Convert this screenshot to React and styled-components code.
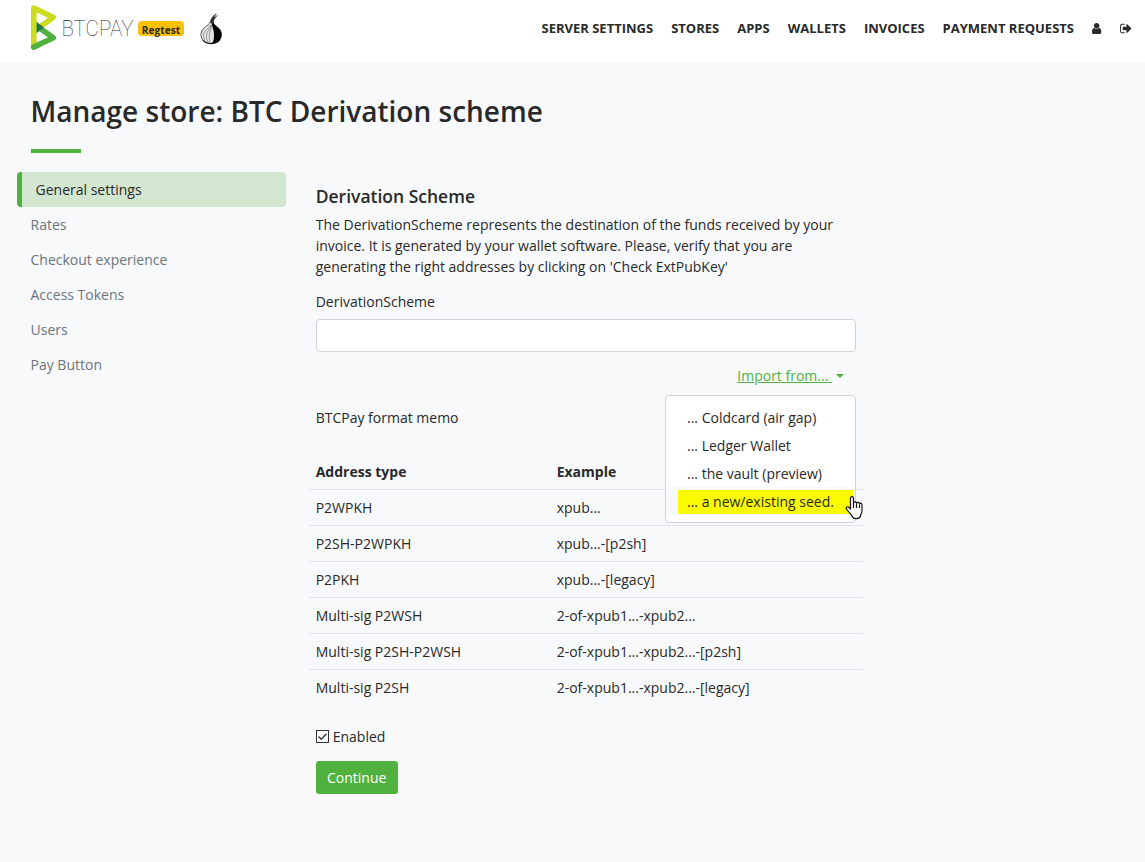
import React from 'react';
import styled, { createGlobalStyle } from 'styled-components';

const GlobalStyle = createGlobalStyle`
  * { box-sizing: border-box; }
  body {
    margin: 0;
    min-height: 100vh;
    background: #f8f9fb;
    color: #292929;
    font: 400 14px/21px 'Open Sans', sans-serif;
  }
`;

const Header = styled.header`
  display: flex;
  align-items: flex-start;
  height: 62px;
  padding: 5px 13px 0 31px;
  background: #fff;
`;
const Brand = styled.a`
  display: flex;
  align-items: flex-start;
`;
const LogoImage = styled.svg`
  overflow: visible;
`;
const Badge = styled.span`
  margin: 16px 0 0 4px;
  width: 46px;
  height: 15px;
  border-radius: 4px;
  background: #ffc107;
  color: #292929;
  font-size: 10px;
  font-weight: 700;
  line-height: 18px;
  letter-spacing: 0.1px;
  text-align: center;
`;
const Onion = styled.svg`
  margin: 6px 0 0 16px;
`;
const Nav = styled.nav`
  display: flex;
  align-items: center;
  gap: 18px;
  height: 21px;
  margin: 13px 0 0 auto;
`;
const NavLink = styled.a`
  display: flex;
  font-size: 13px;
  font-weight: 700;
  white-space: nowrap;
`;

const Main = styled.main`
  padding: 32px 31px 0;
`;
const Title = styled.h1`
  margin: 0 0 0 -0.5px;
  font-size: 28px;
  font-weight: 600;
  line-height: 35px;
`;
const Rule = styled.hr`
  width: 50px;
  height: 4px;
  margin: 20px 0 19px;
  border: 0;
  background: #51b13e;
`;
const Columns = styled.div`
  display: flex;
  align-items: flex-start;
`;
const Side = styled.aside`
  display: flex;
  flex-direction: column;
  width: 269px;
  margin-left: -14px;
`;
const SideLink = styled.a`
  height: 35px;
  padding: 7px 13.5px;
  border-radius: 4px;
  color: ${(p) => (p.$active ? '#292929' : '#6c757d')};
  border-left: ${(p) => (p.$active ? '5px solid #51b13e' : '0')};
  background: ${(p) => (p.$active ? '#d2e6d0' : 'transparent')};
`;
const Content = styled.section`
  width: 540.3px;
  margin-left: 29.7px;
  padding-top: 14px;
`;
const Subtitle = styled.h2`
  margin: 0 0 7px;
  font-size: 17.5px;
  font-weight: 600;
  line-height: 21px;
`;
const Text = styled.p`
  margin: 0 0 14px;
`;
const Label = styled.label`
  display: block;
  margin-bottom: 7px;
`;
const Input = styled.input`
  display: block;
  width: 100%;
  height: 33px;
  border: 1px solid #ced4da;
  border-radius: 4px;
  background: #fff;
`;
const Dropdown = styled.div`
  position: relative;
  display: flex;
  justify-content: flex-end;
  padding: 13px 12px 0 0;
`;
const Toggle = styled.a`
  display: flex;
  align-items: center;
  color: #51b13e;
  span { text-decoration: underline; white-space: pre; }
  &::after {
    content: '';
    margin-left: 4px;
    border: 4px solid transparent;
    border-top-color: #51b13e;
    border-bottom: 0;
  }
`;
const Menu = styled.div`
  position: absolute;
  z-index: 1;
  top: 43px;
  right: 0;
  width: 191px;
  height: 128px;
  padding: 7px 0;
  border: 1px solid #ced4da;
  border-radius: 4px;
  background: #fff;
`;
const MenuItem = styled.a`
  display: block;
  height: 28px;
  padding: 4px 0 0 21px;
  background: ${(p) => (p.$current ? 'linear-gradient(#fafa00, #fafa00) 12px 3px / 175px 24px no-repeat, #f8f9fb' : 'none')};
`;
const Pointer = styled.svg`
  position: absolute;
  z-index: 2;
  right: -8px;
  top: 143px;
`;
const Memo = styled.p`
  margin: 21px 0 25px;
`;
const Table = styled.table`
  width: 554px;
  margin-left: -7px;
  border-collapse: separate;
  border-spacing: 0;
  table-layout: fixed;
  text-align: left;
`;
const Cell = styled.td`
  height: 36px;
  padding: 7px;
  padding-top: ${(p) => (p.$head ? '8px' : '7px')};
  border-top: ${(p) => (p.$head ? '0' : '1px solid #dee2e6')};
  font-weight: ${(p) => (p.$head ? 700 : 400)};
  line-height: 21px;
  &:first-child { width: 241px; }
`;
const Check = styled.label`
  display: flex;
  align-items: center;
  gap: 4px;
  margin: 21px 0 14px;
`;
const Button = styled.button`
  display: block;
  width: 82px;
  height: 33px;
  padding: 0;
  border: 0;
  border-radius: 3px;
  background: #51b13e;
  color: #fff;
  font: inherit;
`;

const Logo = () => (
  <LogoImage width="103" height="46" viewBox="31 5 103 46">
    <g fill="none" strokeWidth="5.6" strokeLinecap="round" strokeLinejoin="round">
      <path d="M33.800 47 53.300 37.800 38.500 27.300" stroke="#51b13e" />
      <path d="M33.800 43V8L53.300 17.300 38.500 28" stroke="#cedc21" />
      <path d="M33.800 47 38 45" stroke="#51b13e" />
    </g>
    <path d="M36.500 21.800v11.400l7.500-5.700z" fill="#1e7a44" />
    <text x="61.5" y="36" textLength="72" lengthAdjust="spacingAndGlyphs" fontFamily="Roboto" fontWeight="250" fontSize="22.5" fill="#292929">BTCPAY</text>
  </LogoImage>
);

const TorIcon = () => (
  <Onion width="23" height="35" viewBox="0 0 23 35">
    <path d="M10 11C9.500 15 1 16 1 23.500 1 29 5 32.500 11 32.500S21.500 29 21.500 23.500C21.500 16 13 15 13 10.500z" fill="#e6e6e6" stroke="#333" strokeWidth=".8" />
    <path d="M11.500 11c0 4 2.500 7 2.500 12.500s-.5 8-3.500 9.200c7.500 0 11-4 11-9.200C21.500 16 13 15 13 10.500z" fill="#000" />
    <path d="M10 14c-1 4-6.500 5-6.500 10.500 0 2 .5 3.500 1.500 5M10.800 14c0 4-4.300 6-4.300 11 0 3 .5 4 1.500 6M11.300 14c.7 4-2 6-2 11 0 3 .2 5 .7 6.500" fill="none" stroke="#777" strokeWidth=".7" />
    <path d="M10.500 12C9.500 9 11.500 5.500 17 2c-1 1.500-2.300 3-2.500 4.500 1.500-1.500 2.500-2.300 4-2.500-3 2.500-5 4.500-5 8z" fill="#333" />
    <path d="M3 29c3 4.500 13 5 16.500 0" fill="none" stroke="#111" strokeWidth="1.200" />
  </Onion>
);

const iconPaths = {
  user: 'M1536 1399q0 109-62.5 187t-150.5 78h-854q-88 0-150.5-78t-62.5-187q0-85 8.5-160.5t31.5-152 58.5-131 94-89 134.5-34.5q131 128 313 128t313-128q76 0 134.5 34.5t94 89 58.5 131 31.5 152 8.500 160.500zm-256-887q0 159-112.5 271.5t-271.5 112.5-271.5-112.5-112.5-271.5 112.5-271.5 271.5-112.5 271.5 112.5 112.5 271.5z',
  signOut: 'M704 1440q0 4 1 20t.5 26.5-3 23.5-10 19.5-20.5 6.5h-320q-119 0-203.5-84.5t-84.5-203.5v-704q0-119 84.5-203.5t203.5-84.5h320q13 0 22.5 9.5t9.5 22.5q0 4 1 20t.5 26.5-3 23.5-10 19.5-20.5 6.5h-320q-66 0-113 47t-47 113v704q0 66 47 113t113 47h312l11.5 1 11.5 3 8 5.5 7 9 2 13.5zm928-544q0 26-19 45l-544 544q-19 19-45 19t-45-19-19-45v-288h-448q-26 0-45-19t-19-45v-384q0-26 19-45t45-19h448v-288q0-26 19-45t45-19 45 19l544 544q19 19 19 45z',
};
const NavIcon = ({ name, left, width }) => (
  <svg width={width} height="13" viewBox={`${left} 0 ${(width / 13) * 1792} 1792`} fill="#292929">
    <path d={iconPaths[name]} />
  </svg>
);

const navItems = ['SERVER SETTINGS', 'STORES', 'APPS', 'WALLETS', 'INVOICES', 'PAYMENT REQUESTS'];
const sideItems = ['General settings', 'Rates', 'Checkout experience', 'Access Tokens', 'Users', 'Pay Button'];
const menuItems = ['... Coldcard (air gap)', '... Ledger Wallet', '... the vault (preview)', '... a new/existing seed.'];
const rows = [
  ['P2WPKH', 'xpub...'],
  ['P2SH-P2WPKH', 'xpub...-[p2sh]'],
  ['P2PKH', 'xpub...-[legacy]'],
  ['Multi-sig P2WSH', '2-of-xpub1...-xpub2...'],
  ['Multi-sig P2SH-P2WSH', '2-of-xpub1...-xpub2...-[p2sh]'],
  ['Multi-sig P2SH', '2-of-xpub1...-xpub2...-[legacy]'],
];

export default function App() {
  return (
    <>
      <GlobalStyle />
      <Header>
        <Brand>
          <Logo />
          <Badge>Regtest</Badge>
          <TorIcon />
        </Brand>
        <Nav>
          {navItems.map((t) => <NavLink key={t}>{t}</NavLink>)}
          <NavLink><NavIcon name="user" left={256} width={9.5} /></NavLink>
          <NavLink><NavIcon name="signOut" left={64} width={12.5} /></NavLink>
        </Nav>
      </Header>
      <Main>
        <Title>Manage store: BTC Derivation scheme</Title>
        <Rule />
        <Columns>
          <Side>
            {sideItems.map((t, i) => <SideLink key={t} $active={i === 0}>{t}</SideLink>)}
          </Side>
          <Content>
            <Subtitle>Derivation Scheme</Subtitle>
            <Text>
              The DerivationScheme represents the destination of the funds received by your invoice. It is
              generated by your wallet software. Please, verify that you are generating the right addresses by
              clicking on 'Check ExtPubKey'
            </Text>
            <Label htmlFor="scheme">DerivationScheme</Label>
            <Input id="scheme" />
            <Dropdown>
              <Toggle><span>{'Import from... '}</span></Toggle>
              <Menu>
                {menuItems.map((t, i) => <MenuItem key={t} $current={i === 3}>{t}</MenuItem>)}
              </Menu>
              <Pointer width="19" height="25" viewBox="0 0 19 25">
                <path d="M5.500 14V3.500C5.500 1 8.500 1 8.500 3.500V8c0-1.500 3-1.500 3 .3 0-1.500 3-1.300 3 .7 0-1.500 2.500-1.300 2.500 1v6c0 2.500-1.500 3-1.500 5-1 3.500-7.500 3.500-8.500 0C6 18.500 3.500 17 1.500 14 .5 12 2.500 11 4 12.500z" fill="#fff" stroke="#111" strokeWidth="1.200" strokeLinejoin="round" />
                <path d="M8.500 8v5M11.500 8.500V13M14.500 9.500V13" stroke="#111" strokeWidth="1.200" />
              </Pointer>
            </Dropdown>
            <Memo>BTCPay format memo</Memo>
            <Table>
              <thead>
                <tr><Cell as="th" $head>Address type</Cell><Cell as="th" $head>Example</Cell></tr>
              </thead>
              <tbody>
                {rows.map(([a, b]) => <tr key={a}><Cell>{a}</Cell><Cell>{b}</Cell></tr>)}
              </tbody>
            </Table>
            <Check>
              <svg width="13" height="13" viewBox="0 0 13 13">
                <rect x=".5" y=".5" width="12" height="12" fill="#fff" stroke="#333" />
                <path d="m2.500 6.500 2.800 2.800 5.200-5.600" fill="none" stroke="#333" strokeWidth="1.300" />
              </svg>
              Enabled
            </Check>
            <Button>Continue</Button>
          </Content>
        </Columns>
      </Main>
    </>
  );
}
